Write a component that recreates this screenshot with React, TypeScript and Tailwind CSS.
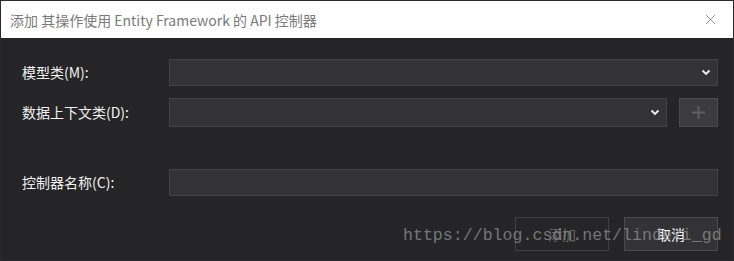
import { X } from 'lucide-react'

const font = { fontFamily: '"Noto Sans CJK SC", "Noto Sans", sans-serif' }

function Chevron() {
  return (
    <svg width="10" height="7" viewBox="0 0 10 7" className="shrink-0">
      <path d="M1.5 1.5 L5 5 L8.5 1.5" fill="none" stroke="#f1f1f1" strokeWidth="1.8" />
    </svg>
  )
}

export default function App() {
  return (
    <div
      className="relative w-[734px] h-[261px] overflow-hidden border border-[#2a2a2c] bg-[#252527] flex flex-col"
      style={font}
    >
      {/* Title bar */}
      <div className="h-[37px] bg-white flex items-center justify-between pl-[9px] pr-[14px] shrink-0">
        <span className="text-[14px] text-[#7a7a7a] leading-none">
          添加 其操作使用 Entity Framework 的 API 控制器
        </span>
        <X size={17} strokeWidth={1} color="#707070" />
      </div>

      {/* Body */}
      <div className="flex-1 flex flex-col pl-[21px] pr-[15px] pt-[21px] text-[14px] text-[#f1f1f1]">
        <div className="flex items-center h-[27px]">
          <span className="w-[147px] shrink-0">模型类(M):</span>
          <div className="flex-1 h-full bg-[#333337] border border-[#434346] flex items-center justify-end pr-[6px]">
            <Chevron />
          </div>
        </div>

        <div className="flex items-center h-[29px] mt-[12px]">
          <span className="w-[147px] shrink-0">数据上下文类(D):</span>
          <div className="flex-1 h-full bg-[#333337] border border-[#434346] flex items-center justify-end pr-[6px]">
            <Chevron />
          </div>
          <div className="w-[39px] h-full ml-[12px] bg-[#3c3c40] border border-[#4a4a4e] flex items-center justify-center">
            <svg width="13" height="13" viewBox="0 0 13 13">
              <path d="M6.5 0 V13 M0 6.5 H13" stroke="#5f5f63" strokeWidth="2" />
            </svg>
          </div>
        </div>

        <div className="flex items-center h-[27px] mt-[42px]">
          <span className="w-[147px] shrink-0">控制器名称(C):</span>
          <div className="flex-1 h-full bg-[#333337] border border-[#434346]" />
        </div>

        <div className="flex justify-end gap-[15px] mt-[21px]">
          <div className="w-[94px] h-[34px] border border-[#3f3f44] flex items-center justify-center text-[#656565]">
            添加
          </div>
          <div className="w-[94px] h-[34px] bg-[#333337] border border-[#4a4a4e] flex items-center justify-center text-white">
            取消
          </div>
        </div>
      </div>

      {/* Watermark */}
      <span
        className="absolute left-[402px] top-[227px] text-[16.6px] leading-none text-[#8a8a8a] opacity-80 whitespace-nowrap"
        style={{ fontFamily: '"Liberation Mono", monospace' }}
      >
        https://blog.csdn.net/lindexi_gd
      </span>
    </div>
  )
}
